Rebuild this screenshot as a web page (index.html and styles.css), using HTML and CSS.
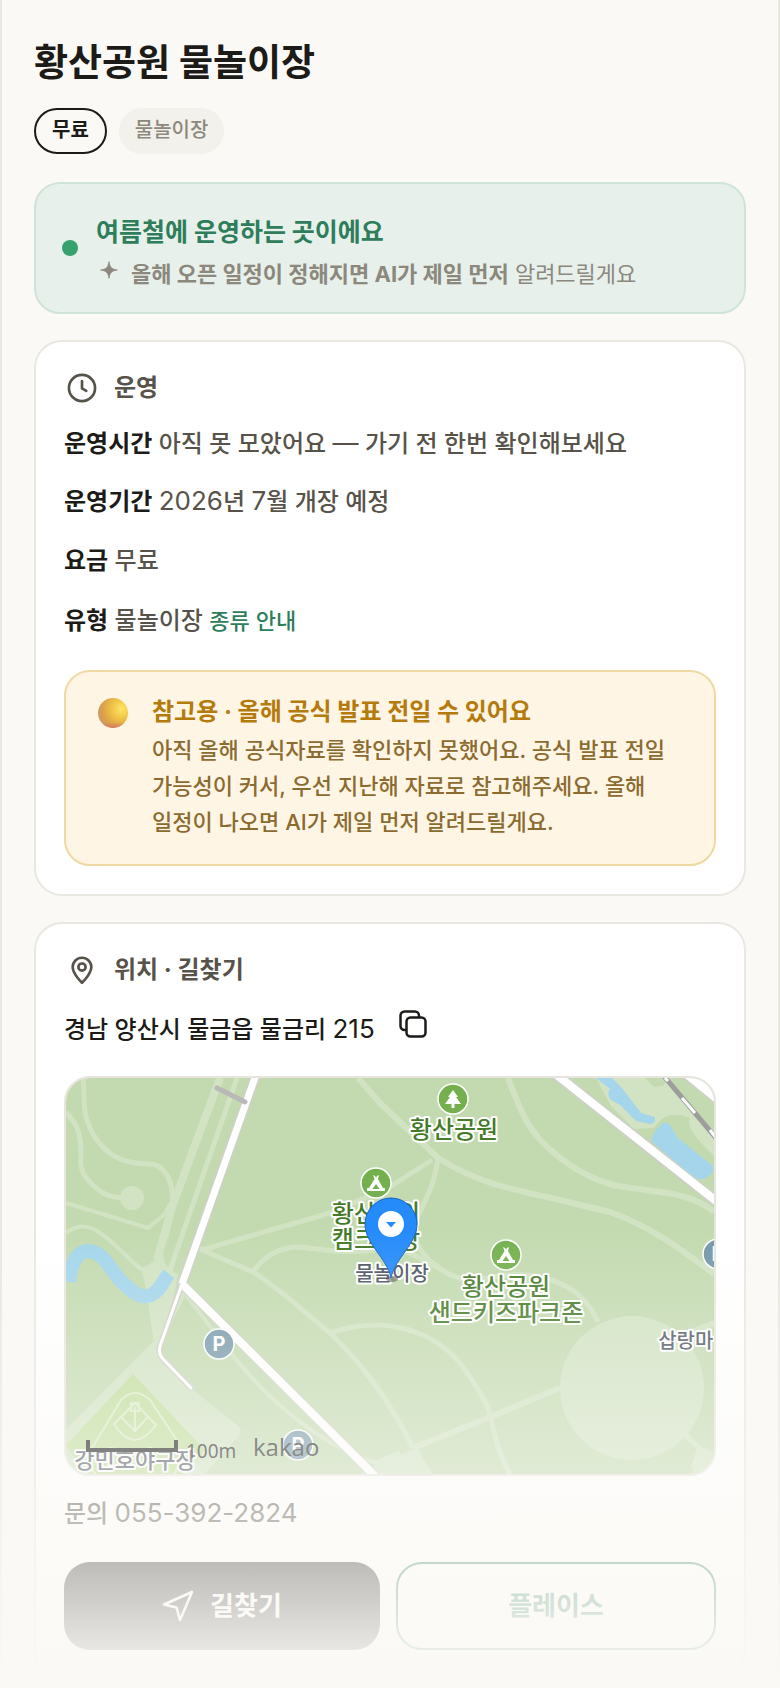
FILE: index.html
```html
<!DOCTYPE html>
<html lang="ko">
<head>
<meta charset="utf-8">
<meta name="viewport" content="width=device-width, initial-scale=1">
<title>황산공원 물놀이장</title>
<link rel="stylesheet" href="styles.css">
</head>
<body>
<main class="page">
  <header class="head">
    <h1 class="title">황산공원 물놀이장</h1>
    <div class="chips">
      <span class="chip chip-free">무료</span>
      <span class="chip chip-type">물놀이장</span>
    </div>
  </header>

  <section class="status">
    <span class="status-dot"></span>
    <div class="status-text">
      <p class="status-title">여름철에 운영하는 곳이에요</p>
      <p class="status-sub">
        <svg class="spark" viewBox="0 0 24 24" aria-hidden="true"><path d="M12 2C12.800 8.500 15.500 11.200 22 12C15.500 12.800 12.800 15.500 12 22C11.200 15.500 8.500 12.800 2 12C8.500 11.200 11.200 8.500 12 2Z" fill="currentColor" stroke="currentColor"/></svg>
        <span><b>올해 오픈 일정이 정해지면 AI가 제일 먼저</b> 알려드릴게요</span>
      </p>
    </div>
  </section>

  <section class="card">
    <h2 class="card-head">
      <svg class="head-icon" viewBox="0 0 24 24" aria-hidden="true"><circle cx="12" cy="12" r="9.800"/><path d="M12 6.800V12.300L15.200 14.200"/></svg>
      운영
    </h2>
    <ul class="facts">
      <li class="fact"><b>운영시간</b> 아직 못 모았어요 <span class="latin">—</span> 가기 전 한번 확인해보세요</li>
      <li class="fact"><b>운영기간</b> <span class="latin">2026</span>년 <span class="latin">7</span>월 개장 예정</li>
      <li class="fact fact-tall"><b>요금</b> 무료</li>
      <li class="fact fact-tall"><b>유형</b> 물놀이장 <a class="guide" href="#types">종류 안내</a></li>
    </ul>
    <div class="note">
      <svg class="ball" viewBox="0 0 30 30" aria-hidden="true">
        <defs>
          <radialGradient id="ball" cx="0.780" cy="0.360" r="0.800"><stop offset="0" stop-color="#ffe764"/><stop offset="0.450" stop-color="#eebf45"/><stop offset="0.800" stop-color="#d9a04a"/><stop offset="1" stop-color="#cf9a66"/></radialGradient>
          <linearGradient id="blush" x1="0" y1="0" x2="0" y2="1"><stop offset="0.800" stop-color="#dc7c5c" stop-opacity="0"/><stop offset="1" stop-color="#d87468" stop-opacity="0.900"/></linearGradient>
        </defs>
        <circle cx="15" cy="15" r="15" fill="url(#ball)"/><circle cx="15" cy="15" r="15" fill="url(#blush)"/>
      </svg>
      <div>
        <p class="note-title">참고용 · 올해 공식 발표 전일 수 있어요</p>
        <p class="note-body">아직 올해 공식자료를 확인하지 못했어요. 공식 발표 전일 가능성이 커서, 우선 지난해 자료로 참고해주세요. 올해 일정이 나오면 AI가 제일 먼저 알려드릴게요.</p>
      </div>
    </div>
  </section>

  <section class="card">
    <h2 class="card-head">
      <svg class="head-icon" viewBox="0 0 24 24" aria-hidden="true"><path d="M12 21.500C12 21.500 5 15 5 9.800A7 7 0 0 1 19 9.800C19 15 12 21.500 12 21.500Z"/><circle cx="12" cy="9.800" r="2.700"/></svg>
      위치 · 길찾기
    </h2>
    <div class="address">
      <span>경남 양산시 물금읍 물금리 <span class="latin">215</span></span>
      <button class="copy" type="button" aria-label="주소 복사">
        <svg viewBox="0 0 28 28" aria-hidden="true"><rect x="7.500" y="7.500" width="19" height="19" rx="4"/><path d="M7.500 20H5.500A4 4 0 0 1 1.500 16V5.500A4 4 0 0 1 5.500 1.500H16A4 4 0 0 1 20 5.500V7.500"/></svg>
      </button>
    </div>

    <div class="map">
      <svg class="map-art" viewBox="0 0 648 396" preserveAspectRatio="xMidYMid slice" role="img" aria-label="황산공원 지도">
        <rect width="648" height="396" fill="#c3dab0"/>
        <g class="path-fill">
          <path d="M87 264L93 277L126 311L171 347Q177 352 173 358L139 396H0V352Z"/>
          <path d="M530 0H579L588 9L597 8L602 0L648 55V78Q618 50 624 40Q600 30 588 50L568 51L545 28Z"/>
          <path d="M314 384L351 370L367 396H296Z"/>
          <circle cx="566" cy="310" r="72"/>
          <path d="M621 352L628 362Q636 371 648 374V396H630L625 390L631 370L615 358Z"/>
          <circle cx="66" cy="120" r="12"/>
          <path d="M75 190Q90 185 97 172Q96 190 112 196L104 240L88 266L80 210Z"/>
        </g>
        <path d="M67 296L139 372L117 396H22L0 368V367Z" fill="#bfdd9a"/>
        <g class="field">
          <path d="M26 370L55 322Q69 308 84 322L112 364M22 388L30 396M113 388L108 396"/>
          <path d="M48 346L69 325L90 347Q68 377 48 346ZM55 339L69 353L82 339M69 329V352M65 325H73V333H65Z"/>
        </g>
        <g class="path" stroke-width="5">
          <path stroke-width="8" d="M154 0L106 129L91 182"/>
          <path d="M171 0L104 192M109 116L100 160"/>
          <path stroke-width="6" d="M118 214L93 262L0 356"/>
          <path d="M17 0C19 18 17 34 21 42C28 64 44 80 64 84C78 88 88 82 97 92C106 102 106 112 107 126"/>
          <path d="M0 34C12 48 15 54 15 78C13 94 20 103 37 115C45 119 50 120 58 120"/>
          <path stroke-width="4" d="M0 125L82 150L99 136L104 126M0 155C12 146 24 147 34 155C48 164 58 177 76 192"/>
          <path d="M127 166L136 172L264 135L322 110L366 82M136 172L187 194C216 212 240 236 264 255C290 280 318 312 347 370"/>
          <path stroke-width="6" d="M292 0L314 25L372 80C410 104 440 110 481 119L544 134C584 148 616 172 648 196"/>
          <path d="M372 80C368 110 358 124 350 142C344 162 356 180 381 195"/>
          <path stroke-width="6" d="M442 0C452 26 456 36 464 49C484 78 520 100 547 107C580 114 624 112 648 134"/>
          <path d="M187 194C202 172 222 169 234 169C262 172 274 176 307 172C340 168 350 178 381 195C410 212 430 190 474 199C504 206 520 218 532 244"/>
          <path d="M264 255C290 246 310 247 314 247C352 249 380 266 397 289C412 310 424 330 425 340C430 364 434 378 444 396"/>
          <path stroke-width="6" d="M347 370L424 339L494 310M610 260L648 245"/>
          <path stroke-width="4" d="M119 216L147 252C180 296 206 324 241 349C270 370 290 378 310 385L334 374"/>
        </g>
        <path d="M3 204C4 190 10 173 22 173C36 173 42 188 54 202C64 212 74 222 85 217C95 212 96 204 103 196" fill="none" stroke="#a4d5eb" stroke-width="14"/>
        <path d="M95 202Q98 196 108 200L101 211Z" fill="#a4d5eb"/>
        <g fill="#a4d5eb">
          <path d="M530 0H546L556 10L575 35L589 39Q590 46 584 46L570 43L554 27L545 22Q540 16 544 11Z"/>
          <path d="M590 52L597 45Q602 44 604 47L612 60L647 88V94L640 100Q634 103 627 99L586 64Q584 61 590 52Z"/>
        </g>
        <g fill="none" stroke-linejoin="round">
          <g stroke="#cfcfcb">
            <path stroke-width="10" d="M191 -6L116 206L317 406"/>
            <path stroke-width="11" d="M487 -6L655 127"/>
            <path stroke-width="16" d="M622 -6L656 22"/>
            <path stroke-width="6" stroke-linecap="round" d="M116 206L94 268Q92 276 97 281L125 310"/>
          </g>
          <g stroke="#fff">
            <path stroke-width="7" d="M191 -6L116 206"/>
            <path stroke-width="8" d="M116 206L317 406M487 -6L655 127"/>
            <path stroke-width="13" d="M622 -6L656 22"/>
            <path stroke-width="3" stroke-linecap="round" d="M116 206L94 268Q92 276 97 281L125 310"/>
          </g>
          <path stroke="#9d9d9d" stroke-width="5" d="M597 -3L650 60"/>
          <path stroke="#fff" stroke-width="3" d="M599 0L602 3M616 20L629 35M644 52L650 60"/>
          <path stroke="#b9b9b9" stroke-width="5" stroke-linecap="round" d="M151 10L179 24"/>
        </g>

        <g stroke="#fff" stroke-width="1.500">
          <circle cx="387" cy="21" r="15" fill="#74b04e"/>
          <circle cx="310" cy="105" r="15" fill="#74b04e"/>
          <circle cx="440" cy="177" r="15" fill="#74b04e"/>
          <circle cx="153" cy="266" r="15" fill="#7698aa"/>
          <circle cx="232" cy="367" r="15" fill="#7698aa"/>
          <circle cx="652" cy="176" r="15" fill="#7698aa"/>
        </g>
        <path d="M387 12L392 19H390L395 26H388.500V30H385.500V26H379L384 19H382Z" fill="#fff"/>
        <g fill="#fff" fill-rule="evenodd">
          <path d="M307 97L309 98L310 99.500L311 98L313 97L312 101L317 110H319V113H301V110H303L308.500 101ZM310 106L306.500 111H313.500Z"/>
          <path d="M437 169L439 170L440 171.500L441 170L443 169L442 173L447 182H449V185H431V182H433L438.500 173ZM440 178L436.500 183H443.500Z"/>
        </g>
        <g class="parking">
          <text x="153" y="273">P</text><text x="232" y="374">P</text><text x="652" y="183">P</text>
        </g>
        <g class="place park">
          <text x="388" y="60">황산공원</text>
          <text x="310" y="144">황산강의</text><text x="310" y="170">캠크닉장</text>
          <text x="440" y="217">황산공원</text><text x="440" y="243">샌드키즈파크존</text>
        </g>
        <g class="place spot">
          <text x="326" y="203">물놀이장</text>
          <text x="629" y="270">삽랑마을</text>
        </g>
        <text class="place yard" x="69" y="390">강민호야구장</text>
        <ellipse cx="326" cy="201" rx="6" ry="3" fill="#333" opacity="0.500"/>
        <path d="M325 200C321 180 299 166 299 146A26 26 0 0 1 351 146C351 166 329 180 325 200Z" fill="#258bfa" stroke="#1565c8"/>
        <circle cx="325" cy="146" r="13" fill="#fff"/>
        <path d="M320 144H330L325 149.500Z" fill="#258bfa"/>
        <path d="M22 362V372H110V362" fill="none" stroke="#111" stroke-width="4"/>
        <text class="scale" x="120" y="380">100m</text>
        <text class="brand" x="187" y="378">kakao</text>
      </svg>
    </div>

    <p class="phone">문의 <span class="latin">055-392-2824</span></p>
    <div class="actions">
      <button class="action action-route" type="button">
        <svg viewBox="0 0 32 32" aria-hidden="true"><path d="M30 2L2 14.500L14.500 17.500L18 30Z"/></svg>
        길찾기
      </button>
      <button class="action action-place" type="button">플레이스</button>
    </div>
  </section>
  <div class="fade"></div>
</main>
</body>
</html>
```
FILE: styles.css
```css
* { box-sizing: border-box; }

body {
  margin: 0;
  background: #faf9f5;
  color: #1c1b18;
  font-family: Inter, "Noto Sans CJK KR", sans-serif;
  font-size: 24px;
  line-height: 40px;
  font-weight: 500;
  word-break: keep-all;
}

h1, h2, p, ul { margin: 0; padding: 0; }
ul { list-style: none; }
b { font-weight: 700; }
button { font: inherit; cursor: pointer; }
svg { display: block; }
.latin { font-size: 26px; line-height: 1; font-weight: 400; }

.page {
  position: relative;
  display: flex;
  flex-direction: column;
  gap: 26px;
  padding: 37px 32px 8px;
  border: 0 solid #e8e7e0;
  border-width: 0 2px;
}

.head { display: flex; flex-direction: column; gap: 19px; margin-bottom: 2px; }
.title { font-size: 37px; line-height: 52px; font-weight: 700; }
.chips { display: flex; gap: 12px; }
.chip {
  padding: 6px 16px 8px;
  border: 2px solid #1c1b18;
  border-radius: 23px;
  font-size: 20px;
  line-height: 28px;
  font-weight: 700;
}
.chip-type {
  padding-right: 14px;
  padding-left: 14px;
  border-color: #f2f1ec;
  background: #f2f1ec;
  color: #8c887d;
  font-weight: 500;
}

.status {
  display: flex;
  align-items: center;
  gap: 18px;
  padding: 20px 26px;
  border: 2px solid #cfe4d8;
  border-radius: 26px;
  background: #e7f0ea;
}
.status-dot { flex: none; width: 16px; height: 16px; border-radius: 50%; background: #35a26d; }
.status-text { padding-top: 6px; }
.status-title { color: #2e7d5b; font-size: 25px; line-height: 44px; font-weight: 700; }
.status-sub {
  display: flex;
  align-items: flex-start;
  gap: 12px;
  margin-top: 2px;
  padding-left: 3px;
  color: #8c887d;
  font-size: 22px;
  line-height: 36px;
  font-weight: 400;
}
.spark { flex: none; width: 20px; height: 20px; margin-top: 4px; }

.card {
  padding: 24px 28px 28px;
  border: 2px solid #e8e7e0;
  border-radius: 28px;
  background: #fff;
}
.card-head {
  display: flex;
  align-items: center;
  gap: 16px;
  padding-left: 2px;
  color: #57534a;
  line-height: 44px;
  font-size: 24px;
  font-weight: 700;
}
.head-icon { width: 32px; height: 32px; fill: none; stroke: currentColor; stroke-width: 2; stroke-linecap: round; stroke-linejoin: round; }

.facts { display: flex; flex-direction: column; gap: 18px; margin-top: 14px; color: #57534a; }
.fact b { color: #1c1b18; }
.fact-tall { line-height: 42px; }
.guide { color: #2e7d5b; font-size: 22px; text-decoration: none; }

.note {
  display: flex;
  gap: 24px;
  margin-top: 28px;
  padding: 20px 32px 24px;
  border: 2px solid #eed9a2;
  border-radius: 26px;
  background: #fff5e5;
}
.ball { flex: none; width: 30px; height: 30px; margin-top: 6px; }
.note-title { color: #b47b0c; line-height: 40px; font-weight: 700; }
.note-body { color: #8b6b2f; font-size: 22px; line-height: 36px; }

.address { display: flex; align-items: flex-start; gap: 24px; margin-top: 18px; }
.copy { padding: 0; border: 0; background: none; color: #1c1b18; }
.copy svg { width: 28px; height: 28px; fill: none; stroke: currentColor; stroke-width: 2.5; }

.map {
  margin-top: 26px;
  border: 2px solid #e8e5de;
  border-radius: 26px;
  overflow: hidden;
}
.map-art { width: 100%; height: 396px; }
.path-fill { fill: #d1e3c3; }
.path { fill: none; stroke: #d1e3c3; stroke-linejoin: round; }
.field { fill: none; stroke: #dcecc8; stroke-width: 2; }
.place { stroke: #fff; stroke-width: 4px; stroke-linejoin: round; paint-order: stroke; text-anchor: middle; font-weight: 500; }
.park { fill: #457a28; font-size: 24px; }
.spot { fill: #4b5563; font-size: 20px; }
.yard { fill: #4b5563; font-size: 22px; }
.parking { fill: #fff; font-size: 20px; font-weight: 700; text-anchor: middle; }
.scale { fill: #222; font-family: "Noto Sans", sans-serif; font-size: 19px; font-weight: 400; }
.brand { fill: #222; font-family: "Open Sans", sans-serif; font-size: 24px; font-weight: 500; }

.phone { margin-top: 18px; color: #57534a; }
.actions { display: flex; gap: 16px; margin-top: 28px; }
.action {
  box-sizing: content-box;
  display: flex;
  flex: 1 1 0;
  align-items: center;
  justify-content: center;
  gap: 16px;
  padding: 0;
  border: 0;
  border-radius: 26px;
  font-size: 26px;
  line-height: 88px;
  font-weight: 700;
}
.action svg { width: 32px; height: 32px; fill: none; stroke: currentColor; stroke-width: 2.5; stroke-linejoin: round; }
.action-route { background: #1c1b18; color: #fff; }
.action-place { border: 2px solid #2e7d5b; background: #fff; color: #2e7d5b; line-height: 84px; }

.fade {
  position: absolute;
  right: -2px;
  bottom: 0;
  left: -2px;
  height: 460px;
  background: linear-gradient(rgba(250, 249, 245, 0), #faf9f5);
  pointer-events: none;
}
```
